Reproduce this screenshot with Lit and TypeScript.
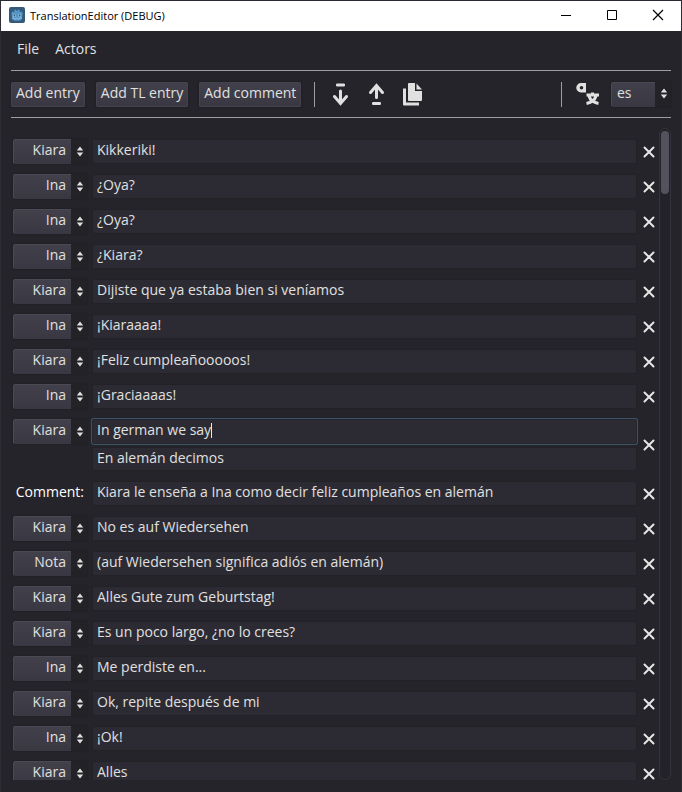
import { LitElement, html, css, svg, nothing } from "lit";
import { customElement, property, state } from "lit/decorators.js";
import { classMap } from "lit/directives/class-map.js";
import { styleMap } from "lit/directives/style-map.js";

interface Entry {
  actor?: string;
  text: string;
  translation?: string;
}

const ENTRIES: Entry[] = [
  { actor: "Kiara", text: "Kikkeriki!" },
  { actor: "Ina", text: "¿Oya?" },
  { actor: "Ina", text: "¿Oya?" },
  { actor: "Ina", text: "¿Kiara?" },
  { actor: "Kiara", text: "Dijiste que ya estaba bien si veníamos" },
  { actor: "Ina", text: "¡Kiaraaaa!" },
  { actor: "Kiara", text: "¡Feliz cumpleañooooos!" },
  { actor: "Ina", text: "¡Graciaaaas!" },
  { actor: "Kiara", text: "In german we say", translation: "En alemán decimos" },
  { text: "Kiara le enseña a Ina como decir feliz cumpleaños en alemán" },
  { actor: "Kiara", text: "No es auf Wiedersehen" },
  { actor: "Nota", text: "(auf Wiedersehen significa adiós en alemán)" },
  { actor: "Kiara", text: "Alles Gute zum Geburtstag!" },
  { actor: "Kiara", text: "Es un poco largo, ¿no lo crees?" },
  { actor: "Ina", text: "Me perdiste en..." },
  { actor: "Kiara", text: "Ok, repite después de mi" },
  { actor: "Ina", text: "¡Ok!" },
  { actor: "Kiara", text: "Alles" },
];

const FIELD_FONT = '14px "Open Sans", "Noto Sans", sans-serif';

@customElement("drop-down")
class DropDown extends LitElement {
  @property() value = "";
  @property() label = "";
  @property() align = "end";

  static styles = css`
    :host {
      display: grid;
      grid-template-columns: 1fr 16px;
      height: 25px;
    }
    .box {
      grid-area: 1 / 1 / 2 / 3;
      appearance: none;
      box-sizing: border-box;
      width: 100%;
      height: 25px;
      margin: 0;
      padding: 0 21px 4px 6px;
      border: 0;
      border-radius: 2px;
      color: #e0e0e0;
      font: 14px "Open Sans", "Noto Sans", sans-serif;
      background:
        linear-gradient(#4b4954, #4b4954) 0 0 / calc(100% - 16px) 1px no-repeat,
        linear-gradient(#4b4954, #4b4954) 0 0 / 1px 100% no-repeat,
        linear-gradient(#42404b, #393741) 0 0 / calc(100% - 16px) 100% no-repeat,
        #232227;
      box-shadow: 0 0 2px #19191d;
      outline: none;
    }
    .end {
      text-align-last: right;
    }
    .arrows {
      grid-area: 1 / 2;
      align-self: center;
      justify-self: end;
      z-index: 1;
      width: 8px;
      height: 12px;
      margin-right: 3px;
      pointer-events: none;
      fill: #e0e0e0;
    }
  `;

  render() {
    return html`
      <select class=${classMap({ box: true, end: this.align === "end" })} aria-label=${this.label}>
        <option>${this.value}</option>
      </select>
      <svg class="arrows" viewBox="0 0 8 12" aria-hidden="true">
        <path d="M4 0.500L7.200 4.500H0.800ZM0.800 6.500H7.200L4 10.500Z" />
      </svg>
    `;
  }
}

@customElement("text-line")
class TextLine extends LitElement {
  @property() value = "";
  @property() label = "";
  @property({ type: Boolean }) active = false;
  @state() private caretX = 0;

  static styles = css`
    :host {
      display: block;
      position: relative;
    }
    .field {
      display: block;
      box-sizing: border-box;
      width: 100%;
      height: 100%;
      margin: 0;
      padding: 0 4px 4px 4px;
      border: 1px solid #222226;
      border-radius: 2px;
      background: #2c2b33;
      color: #e0e0e0;
      font: 14px "Open Sans", "Noto Sans", sans-serif;
      outline: none;
    }
    .active {
      border-color: #26262c;
      box-shadow: 0 0 0 1px #3a5366;
    }
    .caret {
      position: absolute;
      top: 4px;
      width: 1px;
      height: 15px;
      background: #e8e8e8;
    }
  `;

  firstUpdated() {
    if (!this.active) return;
    const context = document.createElement("canvas").getContext("2d");
    if (!context) return;
    context.font = FIELD_FONT;
    this.caretX = Math.round(context.measureText(this.value).width) + 5;
  }

  render() {
    return html`
      <input
        class=${classMap({ field: true, active: this.active })}
        type="text"
        aria-label=${this.label}
        .value=${this.value}
      />
      ${this.active
        ? html`<span class="caret" style=${styleMap({ left: `${this.caretX}px` })}></span>`
        : nothing}
    `;
  }
}

@customElement("entry-row")
class EntryRow extends LitElement {
  @property({ attribute: false }) entry: Entry = { text: "" };

  static styles = css`
    :host {
      display: grid;
      grid-template-columns: 74px 1fr 14px;
      column-gap: 5px;
    }
    .comment {
      align-self: start;
      justify-self: end;
      color: #ffffff;
      font-size: 14px;
      line-height: 22px;
      margin-right: 3px;
    }
    .fields {
      display: grid;
      grid-template-rows: 25px;
      grid-auto-rows: 24px;
      row-gap: 3px;
    }
    .remove {
      display: grid;
      place-items: center;
      align-self: center;
      height: 25px;
      padding: 0;
      border: 0;
      background: none;
    }
    .cross {
      width: 12px;
      height: 12px;
      fill: none;
      stroke: #e6e6e6;
      stroke-width: 2;
      stroke-linecap: round;
    }
  `;

  render() {
    const { actor, text, translation } = this.entry;
    return html`
      ${actor
        ? html`<drop-down .value=${actor} label="Actor"></drop-down>`
        : html`<span class="comment">Comment:</span>`}
      <div class="fields">
        <text-line .value=${text} .active=${translation !== undefined} label=${actor ? "Text" : "Comment"}></text-line>
        ${translation !== undefined
          ? html`<text-line .value=${translation} label="Translation"></text-line>`
          : nothing}
      </div>
      <button class="remove" aria-label="Remove">
        <svg class="cross" viewBox="0 0 12 12"><path d="M1.500 1.500L10.500 10.500M10.500 1.500L1.500 10.500" /></svg>
      </button>
    `;
  }
}

const robotIcon = svg`
  <rect width="16" height="16" rx="2" fill="#34597a" />
  <path d="M2 6.500L3.500 4.600L5.300 5V3L7 2.400L7.400 3.800H8.600L9 2.400L10.700 3V5L12.500 4.600L14 6.500L13.200 7.500V11.500Q12.500 13.800 8 13.800Q3.500 13.800 2.800 11.500V7.500Z" fill="#5596c8" />
  <circle cx="5.300" cy="8.500" r="1.600" fill="#a3cbe6" />
  <circle cx="10.700" cy="8.500" r="1.600" fill="#a3cbe6" />
  <circle cx="5.400" cy="8.500" r=".9" fill="#34526c" />
  <circle cx="10.600" cy="8.500" r=".9" fill="#34526c" />
  <path d="M3 11H5L5.500 12H7L7.500 11.200H8.500L9 12H10.500L11 11H13" fill="none" stroke="#a3cbe6" stroke-width=".7" />
`;

@customElement("app-root")
class AppRoot extends LitElement {
  static styles = css`
    :host {
      display: flex;
      flex-direction: column;
      box-sizing: border-box;
      height: 100vh;
      overflow: hidden;
      border-top: 1px solid #2b2a33;
      border-left: 1px solid #2f2e35;
      border-right: 1px solid #2f2e35;
      background: #25242a;
      color: #e0e0e0;
      font: 14px "Open Sans", "Noto Sans", sans-serif;
    }
    button {
      margin: 0;
      border: 0;
      padding: 0;
      background: none;
      color: inherit;
      font: inherit;
    }
    .titlebar {
      display: flex;
      flex: none;
      align-items: center;
      height: 30px;
      padding-left: 8px;
      background: #ffffff;
      color: #000000;
    }
    .logo {
      width: 16px;
      height: 16px;
      margin-right: 5px;
      padding-bottom: 2px;
    }
    .title {
      flex: 1;
      font-size: 11px;
      font-weight: 400;
      margin: 0;
      padding-bottom: 2px;
    }
    .window-button {
      display: grid;
      place-items: center;
      width: 46px;
      height: 30px;
      padding-bottom: 2px;
    }
    .window-icon {
      width: 12px;
      height: 12px;
      fill: none;
      stroke: #000000;
    }
    .content {
      display: flex;
      flex: 1;
      flex-direction: column;
      min-height: 0;
      padding: 0 10px 12px 10px;
    }
    .menu {
      display: flex;
      gap: 16px;
      height: 39px;
      padding: 0 6px;
      align-items: center;
    }
    .menu-item {
      padding-bottom: 4px;
    }
    .toolbar {
      display: flex;
      align-items: center;
      height: 46px;
      border-top: 1px solid #9b9ea3;
      border-bottom: 1px solid #9b9ea3;
    }
    .actions {
      display: flex;
      gap: 11px;
    }
    .action {
      height: 25px;
      padding: 0 5px 3px 5px;
      border-radius: 2px;
      background: linear-gradient(#42404b, #393741);
      box-shadow: inset 0 0 0 1px #45434d, 0 0 2px #161619;
      white-space: nowrap;
    }
    .divider {
      width: 1px;
      height: 25px;
      background: #9b9ea3;
    }
    .actions + .divider {
      margin-left: 13px;
    }
    .tools {
      display: flex;
      flex: 1;
      gap: 12px;
      padding: 0 14px;
    }
    .tool,
    .glyph {
      display: block;
      width: 24px;
      height: 24px;
      fill: #e0e0e0;
    }
    .language-icon {
      width: 24px;
      height: 24px;
      margin: 0 11px 0 14px;
      fill: #e0e0e0;
    }
    .language {
      width: 60px;
    }
    .body {
      display: flex;
      flex: 1;
      gap: 3px;
      min-height: 0;
      padding-top: 10px;
    }
    .list {
      display: flex;
      flex: 1;
      flex-direction: column;
      gap: 10px;
      overflow: hidden;
      padding: 11px 0 0 2px;
    }
    .list entry-row {
      flex: none;
    }
    .scrollbar {
      box-sizing: border-box;
      width: 12px;
      padding: 2px 1px;
      border: 1px solid #34333b;
      border-radius: 6px;
      background: #232228;
    }
    .thumb {
      height: 63px;
      border-radius: 4px;
      background: #54525d;
    }
  `;

  render() {
    return html`
      <header class="titlebar">
        <svg class="logo" viewBox="0 0 16 16" aria-hidden="true">${robotIcon}</svg>
        <h1 class="title">TranslationEditor (DEBUG)</h1>
        <button class="window-button" aria-label="Minimize">
          <svg class="window-icon" viewBox="0 0 12 12"><path d="M1 6.500H11" /></svg>
        </button>
        <button class="window-button" aria-label="Maximize">
          <svg class="window-icon" viewBox="0 0 12 12"><path d="M1.500 1.500H10.500V10.500H1.500Z" /></svg>
        </button>
        <button class="window-button" aria-label="Close">
          <svg class="window-icon" viewBox="0 0 12 12"><path d="M1 1L11 11M11 1L1 11" stroke-width="1.200" /></svg>
        </button>
      </header>
      <main class="content">
        <nav class="menu">
          <button class="menu-item">File</button>
          <button class="menu-item">Actors</button>
        </nav>
        <div class="toolbar">
          <div class="actions">
            <button class="action">Add entry</button>
            <button class="action">Add TL entry</button>
            <button class="action">Add comment</button>
          </div>
          <span class="divider"></span>
          <div class="tools">
            <button class="tool" aria-label="Move down">
              <svg class="glyph" viewBox="0 0 24 24">
                <rect x="7" y="1.500" width="9" height="3" rx="1.200" />
                <path d="M11.500 9V20M5.500 14.500L11.500 21.500L17.500 14.500" fill="none" stroke="#e0e0e0" stroke-width="3" stroke-linecap="round" />
              </svg>
            </button>
            <button class="tool" aria-label="Move up">
              <svg class="glyph" viewBox="0 0 24 24">
                <path d="M11.500 15.500V5M5.500 10.500L11.500 3.500L17.500 10.500" fill="none" stroke="#e0e0e0" stroke-width="3" stroke-linecap="round" />
                <rect x="7" y="20" width="9" height="3" rx="1.200" />
              </svg>
            </button>
            <button class="tool" aria-label="Copy">
              <svg class="glyph" viewBox="0 0 24 24">
                <path d="M8 1H14V9H21V18Q21 19 20 19H8Q7 19 7 18V2Q7 1 8 1ZM15.500 1.500L21 7.500H15.500Z" />
                <path d="M2 6.500H5V20.500H18V23.500H3Q2 23.500 2 22.500Z" />
              </svg>
            </button>
          </div>
          <span class="divider"></span>
          <svg class="language-icon" viewBox="0 0 24 24" aria-hidden="true">
            <path d="M5 1H10V10.500H5A4.500 4.500 0 0 1 5 1ZM5.500 4A1.800 1.800 0 1 0 5.500 7.600A1.800 1.800 0 1 0 5.500 4Z" fill-rule="evenodd" />
            <path d="M10.500 13H23M16.500 10.500V13M13 14C14 17.500 17.500 20.500 22.500 21.500M20 14C19 17.500 15.500 20.500 10.500 21.500" fill="none" stroke="#e0e0e0" stroke-width="3" />
          </svg>
          <drop-down class="language" value="es" align="start" label="Language"></drop-down>
        </div>
        <div class="body">
          <div class="list">${ENTRIES.map((entry) => html`<entry-row .entry=${entry}></entry-row>`)}</div>
          <div class="scrollbar"><div class="thumb"></div></div>
        </div>
      </main>
    `;
  }
}
